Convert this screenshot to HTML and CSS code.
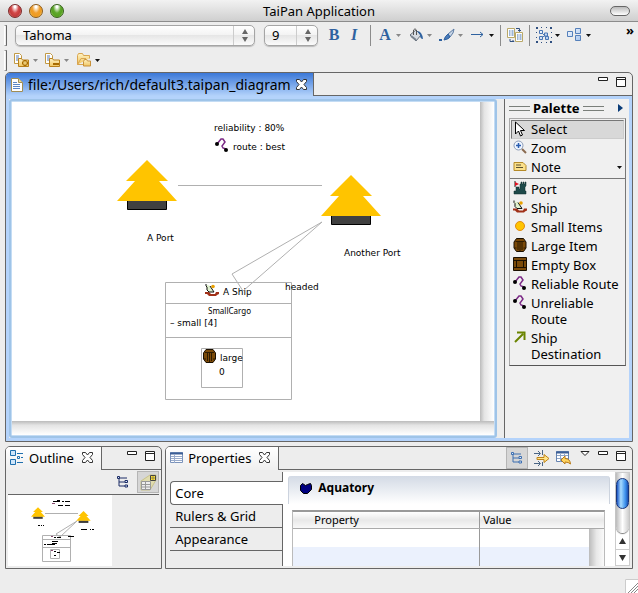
FILE: index.html
```html
<!DOCTYPE html>
<html lang="en">
  <head>
    <meta charset="UTF-8" />
    <meta name="viewport" content="width=device-width, initial-scale=1.0" />
    <title>TaiPan Application</title>
    <link rel="stylesheet" href="styles.css">
  </head>
  <body>
    <!-- shared icons -->
    <svg class="sprite" aria-hidden="true">
      <defs>
        <linearGradient id="folder-fill" x1="0" y1="0" x2="0" y2="1">
          <stop offset="0" stop-color="#fff3c4" />
          <stop offset="1" stop-color="#f0c560" />
        </linearGradient>
        <linearGradient id="node-fill" x1="0" y1="0" x2="1" y2="1">
          <stop offset="0" stop-color="#f4f9ff" />
          <stop offset="1" stop-color="#a9c6ee" />
        </linearGradient>
      </defs>
      <symbol id="i-down" viewBox="0 0 5 3"><path d="M0 0h5L2.500 3z" fill="currentColor" /></symbol>
      <symbol id="i-close" viewBox="0 0 11 11">
        <path d="M1 .5h2.500l2 2.500 2-2.500H10.500v2L8 5.500l2.500 3v2h-3l-2-2.500-2 2.500h-3v-2L3 5.500.5 2.500v-2z" fill="#fff" stroke="#333" />
      </symbol>
      <symbol id="i-min" viewBox="0 0 10 4"><path d="M.5.5h9v3h-9z" fill="#fff" stroke="#222" /></symbol>
      <symbol id="i-max" viewBox="0 0 10 10"><path d="M.5.5h9v9h-9zM.5 2.500h9" fill="#fff" stroke="#222" /></symbol>
      <symbol id="i-route" viewBox="0 0 14 14">
        <path d="M2 6l4-5h2l2 3-3 4 1 2 3 1" fill="none" stroke="#7b2a86" stroke-width="1.500" />
        <circle cx="2" cy="6" r="2" /><circle cx="11" cy="12" r="2" />
      </symbol>
      <symbol id="i-ship" viewBox="0 0 14 13">
        <path d="M0 8h4l2 2h4l1-2h3v2l-2 1-1 1H4L2 10H0z" fill="#a03018" />
        <path d="M1.500.5L5 2l4 6H5L2 6z" fill="#dff0cd" />
        <path d="M1 0v2l1 1v3l2 2h5L5 2" fill="none" stroke="#111" />
        <circle cx="8" cy="2.500" r="1.800" fill="#e8a000" />
      </symbol>
      <symbol id="i-barrel" viewBox="0 0 13 14">
        <path d="M3 .5h7L12.500 4v6L10 13.500H3L.5 10V4z" fill="#7b4a08" stroke="#1a0f00" />
        <path d="M2 3.500h9M4.500 4v8M8.500 4v8M6.500 4v9M1 10h2M10 10h2" fill="none" stroke="#1a0f00" stroke-width=".8" />
      </symbol>
      <symbol id="i-tree" viewBox="0 0 60 50">
        <path d="M10.500 40v9.500h39V40z" fill="#404040" stroke="#000" />
        <path d="M30 0L51 21H42L60 41H0L18 21H9z" fill="#ffc400" />
      </symbol>
      <symbol id="i-folder" viewBox="0 0 16 16">
        <path d="M.5 1.500h5l2 2v8h-7z" fill="#fff" stroke="#c29a45" />
        <path d="M2 4h3M2 6h3M2 8h3" stroke="#5a7db5" />
        <path d="M4.500 6.500h3l1 1.500h6v6.500h-10z" fill="url(#folder-fill)" stroke="#b8801c" />
      </symbol>
      <symbol id="i-hier" viewBox="0 0 12 12">
        <path d="M2 2v8h6M2 6h6M2 2h8" fill="none" stroke="currentColor" />
        <path d="M.5.5h2v2h-2zM8 4.500h2.500v2H8zM8 9h2.500v2H8z" fill="#dce8fa" stroke="currentColor" />
      </symbol>
    </svg>

    <div class="window">
      <header class="titlebar">
        <div class="lights">
          <button class="light red" aria-label="Close"></button>
          <button class="light yellow" aria-label="Minimize"></button>
          <button class="light green" aria-label="Zoom"></button>
        </div>
        <h1>TaiPan Application</h1>
        <button class="pill" aria-label="Toggle toolbar"></button>
      </header>

      <div class="toolbar">
        <span class="grip"></span>
        <div class="combos">
          <span class="combo font">
            <select aria-label="Font"><option>Tahoma</option></select>
            <svg width="6" height="13" viewBox="0 0 6 13"><path d="M3 0l3 5H0zM0 8h6l-3 5z" fill="#666" /></svg>
          </span>
          <span class="combo size">
            <select aria-label="Font size"><option>9</option></select>
            <svg width="6" height="13" viewBox="0 0 6 13"><path d="M3 0l3 5H0zM0 8h6l-3 5z" fill="#666" /></svg>
          </span>
        </div>
        <div class="letters">
          <button class="letter bold">B</button>
          <button class="letter italic">I</button>
        </div>
        <span class="sep"></span>
        <div class="tools">
          <button class="tool dim letter bold" aria-label="Font color">
            <span class="glyph">A</span>
            <svg class="down"><use href="#i-down" /></svg>
          </button>
          <button class="tool dim" aria-label="Fill color">
            <svg width="16" height="16" viewBox="0 0 16 16">
              <path d="M2 8l6-5 5 5-5 6z" fill="#d6dbe2" stroke="#66707c" />
              <path d="M5.500 8V3Q7 .5 8.500 3v5" fill="none" stroke="#555" />
              <path d="M9 4q5 0 6 8-3 0-3-4z" fill="#2f62a0" />
              <path d="M3 9l5 4" stroke="#79838f" stroke-width="2" />
            </svg>
            <svg class="down"><use href="#i-down" /></svg>
          </button>
          <button class="tool dim" aria-label="Line color">
            <svg width="16" height="16" viewBox="0 0 16 16">
              <path d="M15 2L9 7l2 3 3-4z" fill="#c9d6e6" stroke="#5b7ba4" />
              <path d="M9 7q-3 2-4 6 5-1 6-3z" fill="#4a7ab8" stroke="#2f62a0" />
              <path d="M0 12h3v2H0z" fill="#2f62a0" />
            </svg>
            <svg class="down"><use href="#i-down" /></svg>
          </button>
          <button class="tool" aria-label="Line style">
            <svg width="16" height="16" viewBox="0 0 16 16">
              <path d="M1 7.500h12M10 5l3 2.500L10 10" fill="none" stroke="#2f62a0" />
            </svg>
            <svg class="down"><use href="#i-down" /></svg>
          </button>
        </div>
        <span class="sep"></span>
        <button class="tool" aria-label="Copy appearance">
          <svg width="16" height="16" viewBox="0 0 16 16">
            <path d="M.5 1.500h7v9h-7zM8.500 5.500h7v9h-7z" fill="#fff" stroke="#b9a868" />
            <path d="M2 4h1.500M4.500 4h2M2 6h1.500M4.500 6h2M2 8h1.500M4.500 8h2M10 8h1.500M12.500 8h2M10 10h1.500M12.500 10h2M10 12h1.500M12.500 12h2" stroke="#3d6fb0" />
            <path d="M9 1.500h3.500V4M11 3l1.500 1.500L14 3M3 12v2.500h4M5.500 13L7 14.500" fill="none" stroke="#2f4f80" />
          </svg>
        </button>
        <span class="sep"></span>
        <div class="tools">
          <button class="tool" aria-label="Select all">
            <svg width="16" height="16" viewBox="0 0 16 16">
              <path d="M0 0h2v2H0zM5 0h1v1H5zM10 0h1v1h-1zM14 0h2v2h-2zM0 5h1v1H0zM15 5h1v1h-1zM0 10h1v1H0zM15 10h1v1h-1zM0 14h2v2H0zM5 15h1v1H5zM10 15h1v1h-1zM14 14h2v2h-2z" fill="#2f4f80" />
              <path d="M4 4l8 8M5 11l5-3" stroke="#4a76b4" />
              <path d="M3.500 3.500h3v3h-3zM3.500 9.500h3v3h-3zM9.500 9.500h3v3h-3zM8.500 6h3v3h-3z" fill="url(#node-fill)" stroke="#4a76b4" />
            </svg>
            <svg class="down"><use href="#i-down" /></svg>
          </button>
          <button class="tool" aria-label="Arrange">
            <svg width="16" height="16" viewBox="0 0 16 16">
              <path d="M.5 4.500h5v5h-5zM8.500 1.500h5v5h-5zM8.500 8.500h5v5h-5z" fill="url(#node-fill)" stroke="#5580bb" />
            </svg>
            <svg class="down"><use href="#i-down" /></svg>
          </button>
        </div>
        <button class="more" aria-label="More">»</button>
      </div>

      <div class="toolbar second">
        <span class="grip"></span>
        <div class="tools">
          <button class="tool dim" aria-label="New">
            <svg width="16" height="16" viewBox="0 0 16 16"><use href="#i-folder" /><path d="M8 11h6M11 8v6" stroke="#a86b00" stroke-width="3" /><path d="M9 11h4M11 9v4" stroke="#ffe89a" /></svg>
            <svg class="down"><use href="#i-down" /></svg>
          </button>
          <button class="tool dim" aria-label="Remove">
            <svg width="16" height="16" viewBox="0 0 16 16"><use href="#i-folder" /><path d="M8 12h6" stroke="#a86b00" stroke-width="2" /></svg>
            <svg class="down"><use href="#i-down" /></svg>
          </button>
          <button class="tool" aria-label="Open">
            <svg width="16" height="16" viewBox="0 0 16 16">
              <path d="M1.500 12.500v-9l1-2h4l1 2h6v3" fill="url(#folder-fill)" stroke="#d9a550" />
              <path d="M1.500 12.500L5 6.500h5M1.500 12.500H7" fill="none" stroke="#d9a550" />
              <path d="M7.500 9.500l1-2h2l1 1.500h3v5h-7z" fill="url(#folder-fill)" stroke="#c8913a" />
            </svg>
            <svg class="down"><use href="#i-down" /></svg>
          </button>
        </div>
      </div>

      <main class="workbench">
        <section class="pane editor">
          <div class="tabstrip">
            <div class="tab active">
              <svg width="12" height="14" viewBox="0 0 12 14">
                <path d="M.5.5h7l4 4v9H.5z" fill="#fff" stroke="#a08d55" />
                <path d="M7.500.5v4h4" fill="#e8d9a0" stroke="#a08d55" />
                <path d="M2 4.500h4M2 6.500h7M2 8.500h7M2 10.500h7" stroke="#5b86c4" />
              </svg>
              <span>file:/Users/rich/default3.taipan_diagram</span>
              <button class="close" aria-label="Close editor"><svg width="11" height="11"><use href="#i-close" /></svg></button>
            </div>
            <div class="controls">
              <button aria-label="Minimize editor"><svg width="10" height="4"><use href="#i-min" /></svg></button>
              <button aria-label="Maximize editor"><svg width="10" height="10"><use href="#i-max" /></svg></button>
            </div>
          </div>

          <div class="editor-body">
            <div class="canvas">
              <svg class="paper" role="img" aria-label="Port and ship diagram">
                <g fill="none" stroke="#b0b0b0">
                  <path d="M166 83.500h144" />
                  <path d="M310 120L220 172L231 189z" />
                  <path d="M153.500 180.500h126v117h-126zM153.500 201.500h126M153.500 235.500h126M189.500 246.500h41v39h-41z" />
                </g>
                <use href="#i-tree" x="105" y="58" width="60" height="50" />
                <use href="#i-tree" x="309" y="73" width="60" height="50" />
                <use href="#i-route" x="203" y="36" width="14" height="14" />
                <use href="#i-ship" x="193" y="182" width="14" height="13" />
                <use href="#i-barrel" x="191" y="247" width="13" height="14" />
                <g class="labels">
                  <text x="202" y="29">reliability : 80%</text>
                  <text x="221" y="48">route : best</text>
                  <text x="135" y="139">A Port</text>
                  <text x="332" y="154">Another Port</text>
                  <text x="273" y="188">headed</text>
                  <text x="211" y="193">A Ship</text>
                  <text x="196" y="212" class="tiny">SmallCargo</text>
                  <text x="158" y="224">– small [4]</text>
                  <text x="208" y="259">large</text>
                  <text x="207" y="273">0</text>
                </g>
              </svg>
              <div class="shade-right"></div>
              <div class="shade-bottom"></div>
            </div>

            <aside class="palette">
              <div class="palette-head">
                <i></i><h2>Palette</h2><i></i>
                <button aria-label="Hide palette"><svg width="5" height="8" viewBox="0 0 5 8"><path d="M0 0l5 4-5 4z" fill="#0a3c78" /></svg></button>
              </div>
              <div class="drawer">
                <div class="group">
                  <button class="entry selected">
                    <svg width="14" height="16" viewBox="0 0 14 16"><path d="M2.500 1v12l3-3 2 5 2-1-2-4.500h4z" fill="#fff" stroke="#000" /></svg>
                    <span>Select</span>
                  </button>
                  <button class="entry">
                    <svg width="14" height="14" viewBox="0 0 14 14">
                      <path d="M9 9l4 4" stroke="#8a6a50" stroke-width="2" />
                      <circle cx="5.500" cy="5.500" r="4.500" fill="#eef5ff" stroke="#8c9bb5" />
                      <path d="M3 5.500h5M5.500 3v5" stroke="#2a5db0" stroke-width="1.500" />
                    </svg>
                    <span>Zoom</span>
                  </button>
                  <button class="entry">
                    <svg width="14" height="14" viewBox="0 0 14 14">
                      <path d="M1 3.500h9l3 3v5H1z" fill="#fbe08a" stroke="#b58a28" />
                      <path d="M3 6h5M3 8.500h7" stroke="#5a5030" />
                    </svg>
                    <span>Note</span>
                    <svg class="down"><use href="#i-down" /></svg>
                  </button>
                </div>
                <div class="group">
                  <button class="entry">
                    <svg width="14" height="14" viewBox="0 0 14 14">
                      <path d="M1 13v-3h2V6h3v2h1V3h1V1h1v2h1V1h1v2h1V1h1v4l-1 1v4h1v3z" fill="#1e4a4a" stroke="#102c2c" stroke-width=".5" />
                      <path d="M2 0v6" stroke="#222" /><path d="M2 1l4 2-4 2z" fill="#e01020" />
                    </svg>
                    <span>Port</span>
                  </button>
                  <button class="entry">
                    <svg width="14" height="14"><use href="#i-ship" /></svg>
                    <span>Ship</span>
                  </button>
                  <button class="entry">
                    <svg width="14" height="14" viewBox="0 0 14 14"><circle cx="7" cy="7" r="4.500" fill="#ffc400" stroke="#e08a10" /></svg>
                    <span>Small Items</span>
                  </button>
                  <button class="entry">
                    <svg width="14" height="14"><use href="#i-barrel" /></svg>
                    <span>Large Item</span>
                  </button>
                  <button class="entry">
                    <svg width="14" height="14" viewBox="0 0 14 14">
                      <path d="M.5.5h13v13H.5z" fill="#7b4a08" stroke="#1a0f00" />
                      <path d="M0 3.500h14M0 10.500h14M3.500 3v8M10.500 3v8" stroke="#1a0f00" />
                    </svg>
                    <span>Empty Box</span>
                  </button>
                  <button class="entry">
                    <svg width="14" height="14"><use href="#i-route" /></svg>
                    <span>Reliable Route</span>
                  </button>
                  <button class="entry">
                    <svg width="14" height="14"><use href="#i-route" /></svg>
                    <span>Unreliable Route</span>
                  </button>
                  <button class="entry">
                    <svg width="14" height="14" viewBox="0 0 14 14"><path d="M2 12l8-8M4 2.500h7.500V10" fill="none" stroke="#6a8400" stroke-width="2" /></svg>
                    <span>Ship Destination</span>
                  </button>
                </div>
              </div>
            </aside>
          </div>
        </section>

        <div class="bottom">
          <section class="pane outline">
            <div class="tabstrip">
              <div class="tab">
                <svg width="14" height="15" viewBox="0 0 14 15">
                  <path d="M.5.5h5v5h-5zM.5 9.500h5v5h-5z" fill="#cfe6fa" stroke="#1f6fae" />
                  <path d="M7 3.500h6M7 12.500h6M11 7.500h2" stroke="#1f6fae" />
                  <path d="M7.500 6.500h2v2h-2z" fill="#fff" stroke="#1f6fae" />
                </svg>
                <h2>Outline</h2>
                <button class="close" aria-label="Close Outline"><svg width="11" height="11"><use href="#i-close" /></svg></button>
              </div>
              <div class="controls">
                <button aria-label="Minimize Outline"><svg width="10" height="4"><use href="#i-min" /></svg></button>
                <button aria-label="Maximize Outline"><svg width="10" height="10"><use href="#i-max" /></svg></button>
              </div>
            </div>
            <div class="outline-tools">
              <button class="navy" aria-label="Tree view"><svg width="12" height="12"><use href="#i-hier" /></svg></button>
              <button class="pressed" aria-label="Overview">
                <svg width="17" height="17" viewBox="0 0 17 17">
                  <path d="M1 7L10 1h6v5L10 16H1z" fill="#e0dcae" stroke="#c8c28a" />
                  <path d="M1.500 7.500h9v8h-9zM1.500 10.500h9M1.500 13h9M5.500 7.500v8" fill="#eee" stroke="#999" />
                  <path d="M10.500 1.500h5v5h-5z" fill="#ffe23a" stroke="#444" /><path d="M10.500 4h5M13 1.500v5" stroke="#444" stroke-width=".5" />
                </svg>
              </button>
            </div>
            <div class="thumb">
              <svg width="104" height="71" viewBox="0 0 104 71" role="img" aria-label="Diagram overview">
                <g fill="none" stroke="#b0b0b0">
                  <path d="M37 18.500h33M69 26L48 39l4 3z" />
                  <path d="M34.500 40.500h28v26h-28zM34.500 44.500h28M34.500 52.500h28M42.500 54.500h9v9h-9z" />
                </g>
                <use href="#i-tree" x="23" y="12" width="14" height="12" />
                <use href="#i-tree" x="68" y="16" width="15" height="12" />
                <path d="M45 6.500h7M54 6.500h2M57 6.500h5M49 5.500h3M50 10.500h5M57 10.500h5M30 30.500h2M33 30.500h1M35 30.500h1M73 34.500h6M82 34.500h1M84 34.500h2M46 42.500h2M49 42.500h4M60 41.500h6M44 46.500h6M36 49.500h2M39 49.500h8M44 48.500h5M46 56.500h2M49 57.500h3M46 60.500h2" stroke="#000" />
                <path d="M44 8.500h3M43 41.500h2M43 55.500h2" stroke="#8a4a70" />
              </svg>
            </div>
          </section>

          <section class="pane properties">
            <div class="tabstrip">
              <div class="tab">
                <svg width="13" height="11" viewBox="0 0 13 11">
                  <path d="M.5.5h12v10H.5z" fill="#fff" stroke="#7b93bb" />
                  <path d="M0 1.500h13" stroke="#3d5f96" stroke-width="2" />
                  <path d="M1 4.500h11M1 6.500h11M1 8.500h11M4.500 3v8" stroke="#9aaccb" />
                </svg>
                <h2>Properties</h2>
                <button class="close" aria-label="Close Properties"><svg width="11" height="11"><use href="#i-close" /></svg></button>
              </div>
              <div class="view-tools">
                <button class="pressed blue" aria-label="Show categories"><svg width="12" height="12"><use href="#i-hier" /></svg></button>
                <button aria-label="Show advanced">
                  <svg width="16" height="16" viewBox="0 0 16 16">
                    <path d="M0 3.500h6M4 1l2.500 2.500L4 6M0 13.500h6M4 11l2.500 2.500L4 16M8.500 0v5M8.500 12v4" fill="none" stroke="#4a6585" />
                    <path d="M3 7.500h7v-3l5 4-5 4v-3H3z" fill="#ffe58a" stroke="#c08418" />
                  </svg>
                </button>
                <button aria-label="Restore default">
                  <svg width="16" height="16" viewBox="0 0 16 16">
                    <path d="M.5 1.500h12v10H.5z" fill="#fff" stroke="#6583b0" /><path d="M0 2.500h13" stroke="#3d5f96" stroke-width="2" />
                    <path d="M1 5.500h11M1 8.500h11M4.500 4v8M8.500 4v8" stroke="#8ea5c8" />
                    <path d="M5 10l4-4v2.500q5 0 5.500 5.500-2-2-5.500-2V14z" fill="#ffd560" stroke="#b87a18" />
                  </svg>
                </button>
              </div>
              <div class="controls">
                <button aria-label="View menu"><svg width="10" height="6" viewBox="0 0 10 6"><path d="M1 .5h8l-4 4z" fill="#fff" stroke="#222" /></svg></button>
                <button aria-label="Minimize Properties"><svg width="10" height="4"><use href="#i-min" /></svg></button>
                <button aria-label="Maximize Properties"><svg width="10" height="10"><use href="#i-max" /></svg></button>
              </div>
            </div>
            <div class="props-body">
              <nav class="side-tabs">
                <button class="current">Core</button>
                <button>Rulers &amp; Grid</button>
                <button>Appearance</button>
              </nav>
              <div class="sheet">
                <div class="sheet-main">
                  <div class="sheet-title">
                    <svg width="12" height="11" viewBox="0 0 12 11"><path d="M.5 2.500l2-2 3 2 2-1 3-1 1 2v4l-4 4h-4l-3-3z" fill="#000080" stroke="#000" /></svg>
                    <h3>Aquatory</h3>
                  </div>
                  <div class="grid">
                    <table>
                      <thead><tr><th class="prop">Property</th><th>Value</th></tr></thead>
                      <tbody>
                        <tr><td></td><td></td></tr>
                        <tr><td></td><td></td></tr>
                      </tbody>
                    </table>
                    <div class="track"></div>
                  </div>
                </div>
                <div class="scrollbar">
                  <div class="groove"><div class="thumb-bar"></div></div>
                  <button aria-label="Scroll up"><svg width="7" height="6" viewBox="0 0 7 6"><path d="M3.500 0L7 6H0z" fill="#333" /></svg></button>
                  <button aria-label="Scroll down"><svg width="7" height="6" viewBox="0 0 7 6"><path d="M0 0h7L3.500 6z" fill="#333" /></svg></button>
                </div>
              </div>
            </div>
          </section>
        </div>
      </main>

      <footer class="status">
        <svg width="13" height="14" viewBox="0 0 13 14"><path d="M0 0h13v14H0z" fill="#fff" /><path d="M3 14L13 4M6 14l7-7M9 14l4-4" stroke="#888" /><path d="M.5 14V.5H13" fill="none" stroke="#ccc" /></svg>
      </footer>
    </div>
  </body>
</html>
```
FILE: styles.css
```css
* {
  box-sizing: border-box;
}

body {
  margin: 0;
  background: #ededed;
  font-family: "Noto Sans", "Open Sans", sans-serif;
  font-size: 13px;
  line-height: 16px;
  color: #000;
}

h1, h2, h3 {
  margin: 0;
  font-size: 13px;
  font-weight: 400;
}

button {
  margin: 0;
  padding: 0;
  border: 0;
  background: none;
  font: inherit;
  color: inherit;
}

svg {
  display: block;
  flex: none;
}

.sprite {
  position: absolute;
  width: 0;
  height: 0;
}

.window {
  display: flex;
  flex-direction: column;
  min-height: 100vh;
}

/* title bar */
.titlebar {
  display: grid;
  grid-template-columns: 1fr auto 1fr;
  align-items: center;
  height: 22px;
  padding: 0 8px;
  border-bottom: 1px solid #8c8c8c;
  background: linear-gradient(#f2f2f2, #cfcfcf);
}

.lights {
  display: flex;
  gap: 7px;
}

.light {
  width: 14px;
  height: 14px;
  border: 1px solid #555;
  border-radius: 50%;
}

.red { background: radial-gradient(ellipse at 50% 10%, #fff 10%, #d44a4a 45%, #c23a3a 65%, #ffa9a0); border-color: #7c2a2a; }
.yellow { background: radial-gradient(ellipse at 50% 10%, #fff 10%, #f0a030 45%, #ee9a20 65%, #ffef90); border-color: #8c5a1a; }
.green { background: radial-gradient(ellipse at 50% 10%, #fff 10%, #5fa82e 45%, #55a020 65%, #c8f590); border-color: #35601a; }

.pill {
  justify-self: end;
  width: 20px;
  height: 10px;
  border: 1px solid #666;
  border-radius: 5px;
  background: linear-gradient(#bbb, #fff);
}

/* toolbars */
.toolbar {
  display: flex;
  align-items: center;
  gap: 6px;
  height: 26px;
  padding-left: 4px;
}

.toolbar.second {
  height: 24px;
}

.grip {
  width: 3px;
  height: 21px;
  border: 1px solid #999;
  border-left-color: #fff;
  border-right-color: #666;
}

.combos {
  display: flex;
  gap: 9px;
  padding-left: 2px;
}

.combo {
  position: relative;
  height: 21px;
}

.combo.font { width: 240px; }
.combo.size { width: 54px; }

.combo select {
  width: 100%;
  height: 21px;
  padding: 0 7px;
  border: 1px solid #a5a5a5;
  border-radius: 5px;
  background: linear-gradient(90deg, transparent calc(100% - 21px), #ccc calc(100% - 21px), #ccc calc(100% - 20px), transparent calc(100% - 20px)), linear-gradient(#fff, #f2f2f2 50%, #e6e6e6 50%, #fbfbfb);
  box-shadow: 0 1px 1px #bbb;
  appearance: none;
  font: inherit;
  color: #000;
}

.combo svg {
  position: absolute;
  top: 4px;
  right: 7px;
  pointer-events: none;
}

.letters {
  display: flex;
}

.letter {
  width: 20px;
  font-family: "Liberation Serif", serif;
  font-size: 16px;
  color: #2f62a0;
}

.bold { font-weight: 700; }
.italic { font-weight: 700; font-style: italic; }

.sep {
  width: 1px;
  height: 21px;
  background: #8c8c8c;
}

.tools {
  display: flex;
  gap: 7px;
}

.second .tools {
  padding-left: 1px;
}

.tool {
  display: flex;
  align-items: center;
  gap: 3px;
  width: auto;
}

.glyph {
  width: 16px;
}

.down {
  width: 5px;
  height: 3px;
  color: #111;
}

.dim .down {
  color: #888;
}

.more {
  align-self: flex-start;
  margin: 0 4px 0 auto;
  font-size: 13px;
  font-weight: 700;
}

/* panes */
.workbench {
  display: flex;
  flex: 1;
  flex-direction: column;
  gap: 4px;
  padding: 0 5px;
}

.pane {
  display: flex;
  flex-direction: column;
  min-width: 0;
  border: 1px solid #666;
  border-radius: 5px 5px 0 0;
}

.tabstrip {
  display: flex;
  height: 23px;
  border-bottom: 1px solid #666;
}

.tab {
  display: flex;
  align-items: center;
  gap: 5px;
  height: 23px;
  padding: 0 8px 2px 4px;
  border-right: 1px solid #666;
  border-radius: 4px 0 0 0;
  background: linear-gradient(#fff, #efefef);
  white-space: nowrap;
}

.tab .close {
  margin-left: 3px;
}

.tab.active {
  background: linear-gradient(#3b78d8, #b4d3fb);
  padding: 0 6px 0 5px;
  font-size: 14px;
}

.active .close {
  margin-left: 0;
}

.controls {
  display: flex;
  align-items: flex-start;
  gap: 8px;
  margin-left: auto;
  padding: 4px 6px 0 0;
}

.editor {
  flex: 1;
}

.editor-body {
  display: flex;
  flex: 1;
  border: 3px solid #b4d3fb;
}

.canvas {
  display: grid;
  flex: 1;
  grid-template-columns: 1fr 14px;
  grid-template-rows: 1fr 14px;
  min-width: 0;
  border: 3px solid #9fc4e8;
  border-radius: 3px;
  outline: 1px solid #c4dcf4;
  outline-offset: -3px;
  background: #fff;
}

.paper {
  width: 100%;
  height: 100%;
  min-height: 300px;
  background: #fff;
}

.labels {
  font-family: "DejaVu Sans", sans-serif;
  font-size: 9px;
}

.labels .tiny {
  font-family: "Noto Sans", sans-serif;
  font-size: 8px;
}

.shade-right {
  background: linear-gradient(90deg, #bbb, #e4e4e4 30%, #fff);
}

.shade-bottom {
  grid-column: 1 / 3;
  background: linear-gradient(#bbb, #e4e4e4 30%, #fff);
}

/* palette */
.palette {
  flex: none;
  width: 132px;
  padding-left: 5px;
  border-left: 7px solid #ededed;
  box-shadow: inset 1px 0 #666;
  background: #f0f0f0;
}

.palette-head {
  display: flex;
  align-items: center;
  gap: 3px;
  height: 18px;
}

.palette-head h2 {
  font-weight: 700;
}

.palette-head i {
  width: 21px;
  height: 5px;
  border: solid #7a7f7a;
  border-width: 1px 0;
}

.palette-head button {
  margin: 0 6px 0 auto;
}

.drawer {
  margin: 1px 3px 0 0;
  border: 1px solid #aaa;
  border-right-color: #777;
  border-bottom-color: #555;
}

.group {
  padding: 1px;
}

.group + .group {
  border-top: 1px solid #777;
}

.entry {
  display: flex;
  align-items: flex-start;
  gap: 4px;
  width: 100%;
  padding: 1px 2px 2px;
  text-align: left;
}

.entry span {
  flex: 1;
}

.entry .down {
  align-self: center;
}

.entry.selected {
  padding: 0 1px 1px;
  border: 1px solid #777;
  border-right-color: #ccc;
  border-bottom-color: #ccc;
  background: #d8d8d8;
}

/* outline and properties */
.bottom {
  display: flex;
  gap: 3px;
}

.outline {
  flex: 1;
}

.properties {
  flex: 3;
}

.outline-tools {
  display: flex;
  justify-content: flex-end;
  gap: 8px;
  margin: 0 2px;
  padding: 1px 0;
  border-bottom: 1px solid #666;
}

.pressed {
  display: flex;
  align-items: center;
  justify-content: center;
  width: 22px;
  height: 22px;
  border: 1px solid #b5b5b5;
  background: #d6d6d6;
}

.navy { color: #1c2c66; }
.blue { color: #3d6fb0; }

.thumb {
  padding: 0 0 1px 2px;
}

.thumb > svg {
  background: #fff;
}

.view-tools {
  display: flex;
  align-items: center;
  gap: 6px;
  margin-left: auto;
}

.properties .controls {
  margin-left: 0;
  padding-left: 8px;
}

.props-body {
  display: flex;
  flex: 1;
  padding: 2px 2px 2px 4px;
}

.side-tabs {
  display: flex;
  flex: none;
  flex-direction: column;
  width: 113px;
  padding-top: 9px;
  background: linear-gradient(#666, #666) right / 1px 100% no-repeat;
}

.side-tabs button {
  height: 23px;
  padding: 0 5px 1px;
  border-bottom: 1px solid #666;
  text-align: left;
}

.side-tabs .current {
  height: 24px;
  padding-left: 4px;
  border: 1px solid #666;
  border-right: 0;
  border-radius: 4px 0 0 4px;
  background: #fff;
}

.sheet {
  display: flex;
  flex: 1;
  gap: 5px;
  padding-left: 5px;
  background: #fff;
}

.sheet-main {
  flex: 1;
  padding-top: 4px;
}

.sheet-title {
  display: flex;
  align-items: center;
  gap: 6px;
  height: 28px;
  padding: 0 11px 4px;
  border-left: 1px solid #ccd3de;
  border-right: 1px solid #ccd3de;
  border-radius: 3px 3px 0 0;
  background: linear-gradient(#d3dae5, #fff);
}

.sheet-title h3 {
  font-size: 12px;
  font-weight: 700;
}

.grid {
  display: grid;
  grid-template-columns: 1fr 15px;
  margin: 6px 5px 0 4px;
  border: 1px solid #bbb;
  border-top: 2px solid #999;
  border-bottom: 0;
}

.grid table {
  grid-area: 1 / 1 / 2 / 3;
  width: 100%;
  border-collapse: collapse;
  table-layout: fixed;
}

.grid th {
  height: 16px;
  padding: 0 3px;
  border-bottom: 1px solid #aaa;
  background: linear-gradient(#fff, #e8e8e8 50%, #f8f8f8);
  font-size: 11px;
  font-weight: 400;
  line-height: 15px;
  text-align: left;
}

.grid .prop {
  width: 60%;
  padding-left: 21px;
}

.grid td {
  height: 19px;
  padding: 0;
}

.grid th + th,
.grid td + td {
  border-left: 1px solid #999;
}

.grid tbody tr:nth-child(2) {
  background: #ebf1fd;
}

.track {
  grid-area: 1 / 2;
  margin-top: 17px;
  background: linear-gradient(90deg, #bbb, #e8e8e8 50%, #fafafa);
}

.scrollbar {
  display: flex;
  flex-direction: column;
  width: 15px;
  border: 1px solid #ccc;
}

.groove {
  flex: 1;
  padding-top: 5px;
  border-radius: 0 0 7px 7px;
  background: linear-gradient(90deg, #bbb, #fff 50%, #ccc);
  box-shadow: 0 1px 1px #777;
}

.thumb-bar {
  height: 31px;
  border: 1px solid #16357c;
  border-radius: 7px;
  background: linear-gradient(90deg, #1c56c4, #a8dcff 35%, #3f93ee 75%, #1b50b0);
}

.scrollbar button {
  display: flex;
  align-items: center;
  justify-content: center;
  height: 16px;
}

.scrollbar button + button {
  border-top: 1px solid #ccc;
}

.status {
  display: flex;
  align-items: flex-end;
  justify-content: flex-end;
  height: 24px;
}
```
